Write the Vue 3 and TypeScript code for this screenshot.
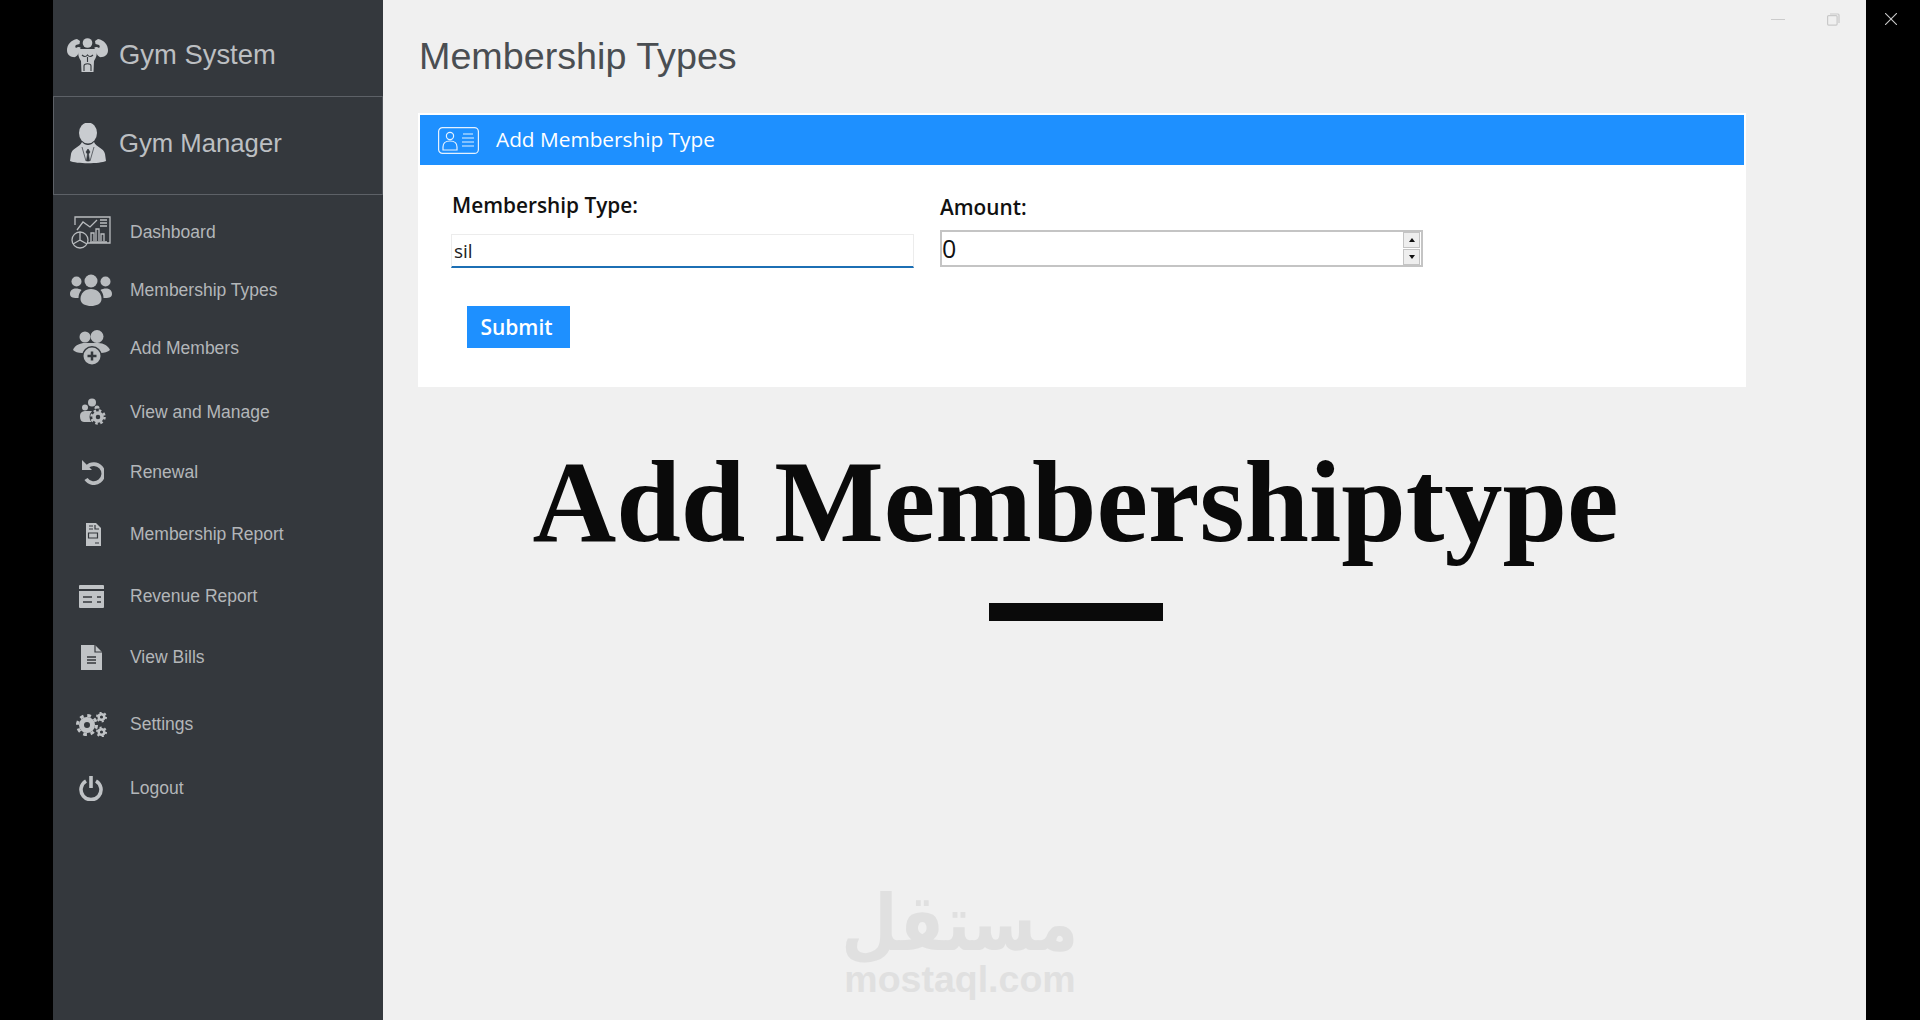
<template>
  <div class="page">
    <div class="edge edge-left"></div>

    <aside class="sidebar">
      <div class="brand">
        <svg class="brand-icon" width="41" height="34" viewBox="0 0 41 34">
          <circle cx="20.500" cy="5" r="4.800" fill="#c4c7ca" />
          <path d="M12 11 L29 11 C31 15 29 20 27 23 L26.500 34 L14.500 34 L14 23 C12 20 10 15 12 11 Z" fill="#c4c7ca" />
          <path d="M13.500 10 C12 15 10 20 6 19 C2 18.500 0 16 0 12 C0 7 4 2 10 1 L13 3 L12.500 6 L9 7 C8 8 8 9 9 10 C11 8.500 13 9 14 10 Z" fill="#c4c7ca" />
          <path d="M27.500 10 C29 15 31 20 35 19 C39 18.500 41 16 41 12 C41 7 37 2 31 1 L28 3 L28.500 6 L32 7 C33 8 33 9 32 10 C30 8.500 28 9 27 10 Z" fill="#c4c7ca" />
          <path d="M17 33 V28 C17 25 24 25 24 28 V33 M15 17 C17 19 19 19 20.500 17 C22 19 24 19 26 17 M20.500 19 V24" fill="none" stroke="#34383d" stroke-width="1.100" />
        </svg>
        <span>Gym System</span>
      </div>

      <div class="manager">
        <svg class="brand-icon" width="36" height="41" viewBox="0 0 36 41">
          <ellipse cx="18" cy="10" rx="9" ry="10.500" fill="#c9ccd0" />
          <path d="M12 19 C10 24 2 25 1 31 L0 38 C6 41 30 41 36 38 L35 31 C34 25 26 24 24 19 C21 23 15 23 12 19 Z" fill="#c9ccd0" />
          <path d="M18 26 L16 29 L17.500 31 L16.500 38 L19.500 38 L18.500 31 L20 29 Z M12 24 L16 38 M24 24 L20 38" fill="#34383d" stroke="#34383d" stroke-width="0.700" />
        </svg>
        <span>Gym Manager</span>
      </div>

      <nav class="nav">
        <a
          v-for="item in navItems"
          :key="item.label"
          class="nav-item"
          :style="{ marginTop: item.offset + 'px' }"
        >
          <span class="nav-icon">
            <svg v-if="item.icon === 'dashboard'" width="40" height="33" viewBox="0 0 40 33" fill="none" stroke="#b9bcbf" stroke-width="1.300">
              <path d="M4 9 V1 H39 V27 H15" />
              <path d="M6 14 L12 6 L19 11 L26 4" />
              <path d="M29 4 H36 M29 7 H36 M29 10 H36" />
              <circle cx="9" cy="24" r="8" fill="#34383d" />
              <path d="M9 16 V24 L16 28 M9 24 L2 28" />
              <path d="M20 25 V17 H23 V25 M25 25 V13 H28 V25 M30 25 V18 H33 V25 M19 26 H36" />
            </svg>
            <svg v-else-if="item.icon === 'users'" width="42" height="32" viewBox="0 0 42 32" fill="#b9bcbf">
              <circle cx="21" cy="7" r="6.500" />
              <circle cx="6.500" cy="7.500" r="5" />
              <circle cx="35.500" cy="7.500" r="5" />
              <path d="M10.500 25 C10.500 19 15 15 21 15 C27 15 31.500 19 31.500 25 C31.500 30 26 32 21 32 C16 32 10.500 30 10.500 25 Z" />
              <path d="M0 20 C0 16 3 14.500 6 14.500 C8 14.500 10 15 11.500 16 C9.500 18 8.500 21 8.500 24 C4 24 0 24 0 20 Z" />
              <path d="M42 20 C42 16 39 14.500 36 14.500 C34 14.500 32 15 30.500 16 C32.500 18 33.500 21 33.500 24 C38 24 42 24 42 20 Z" />
            </svg>
            <svg v-else-if="item.icon === 'add'" width="37" height="36" viewBox="0 0 37 36" fill="#b9bcbf">
              <circle cx="12" cy="7" r="5.500" />
              <circle cx="24" cy="6.500" r="6.500" />
              <path d="M0 20 C2 15 7 13 12 13 L25 13 C31 13 35 16 37 20 C35 22 31 23 28 23 L9 23 C5 23 2 22 0 20 Z" />
              <circle cx="19" cy="26" r="10" fill="#34383d" />
              <circle cx="19" cy="26" r="8.500" />
              <path d="M19 21.500 V30.500 M14.500 26 H23.500" stroke="#34383d" stroke-width="2.500" />
            </svg>
            <svg v-else-if="item.icon === 'manage'" class="shift-r" width="26" height="28" viewBox="0 0 26 28" fill="#b9bcbf">
              <circle cx="12" cy="4.500" r="4" />
              <circle cx="5" cy="9.500" r="3" />
              <circle cx="17" cy="10" r="2.500" />
              <path d="M0 18 C0 14 3 13 6 13 L14 13 L12 24 L4 24 C1 24 0 21 0 18 Z" />
              <circle cx="18" cy="19" r="8.500" fill="#34383d" />
              <circle cx="18" cy="19" r="4" fill="none" stroke="#b9bcbf" stroke-width="3.500" />
              <circle cx="18" cy="19" r="6.500" fill="none" stroke="#b9bcbf" stroke-width="2.500" stroke-dasharray="2.500 2.600" />
            </svg>
            <svg v-else-if="item.icon === 'renew'" class="shift-r" width="22" height="25" viewBox="0 0 22 25" fill="none">
              <path d="M5 7 A9.500 9.500 0 1 1 4 19" stroke="#b9bcbf" stroke-width="3.800" />
              <path d="M0 0 V10 H10 Z" fill="#b9bcbf" />
            </svg>
            <svg v-else-if="item.icon === 'report'" class="shift-r" width="16" height="23" viewBox="0 0 16 23">
              <path d="M1 0 H11 L16 5 V23 H1 Z" fill="#c0c3c6" />
              <path d="M4 3 H8 M4 6 H8 M10 2 L10 6 L14 6 M3.500 10 H12.500 V15 H3.500 Z M10 20 H14" fill="none" stroke="#34383d" stroke-width="1.200" />
            </svg>
            <svg v-else-if="item.icon === 'revenue'" width="25" height="23" viewBox="0 0 25 23">
              <rect width="25" height="23" rx="1" fill="#c0c3c6" />
              <path d="M0 5 H25" stroke="#34383d" stroke-width="2" />
              <path d="M4 12 H13 M4 17 H13 M18 12 H22 M18 17 H22" stroke="#34383d" stroke-width="1.500" />
            </svg>
            <svg v-else-if="item.icon === 'bills'" width="22" height="25" viewBox="0 0 22 25">
              <path d="M1 0 H15 L22 7 V25 H1 Z" fill="#c0c3c6" />
              <path d="M15 0 V7 H22" fill="none" stroke="#34383d" stroke-width="1.200" />
              <path d="M7 12 H16 M7 15 H16 M7 18 H16" stroke="#34383d" stroke-width="1.300" />
            </svg>
            <svg v-else-if="item.icon === 'settings'" width="31" height="25" viewBox="0 0 31 25" fill="none" stroke="#c0c3c6">
              <circle cx="11" cy="13" r="5.500" stroke-width="5" />
              <circle cx="11" cy="13" r="9.500" stroke-width="3" stroke-dasharray="3.700 3.760" />
              <circle cx="25.500" cy="5" r="2.800" stroke-width="2.500" />
              <circle cx="25.500" cy="5" r="4.500" stroke-width="2" stroke-dasharray="2 2.700" />
              <circle cx="25.500" cy="20" r="2.800" stroke-width="2.500" />
              <circle cx="25.500" cy="20" r="4.500" stroke-width="2" stroke-dasharray="2 2.700" />
            </svg>
            <svg v-else width="24" height="26" viewBox="0 0 24 26" fill="none" stroke="#c0c3c6" stroke-width="3.600">
              <path d="M7 6 A10 10 0 1 0 17 6" />
              <path d="M12 1 V13" />
            </svg>
          </span>
          <span>{{ item.label }}</span>
        </a>
      </nav>
    </aside>

    <main class="content">
      <h1 class="title">Membership Types</h1>

      <section class="card">
        <header class="card-header">
          <svg width="41" height="27" viewBox="0 0 41 27" fill="none" stroke="#e4f1ff" stroke-width="1.200">
            <rect x="0.600" y="0.600" width="39.800" height="25.800" rx="4" />
            <circle cx="12" cy="9" r="3.600" />
            <path d="M5 23 V20 C5 16 8 14 12 14 C16 14 19 16 19 20 V23 Z" />
            <path d="M25 7 H35 M24 11 H36 M24 15 H36 M24 19 H36" />
          </svg>
          <span>Add Membership Type</span>
        </header>

        <div class="card-body">
          <div class="fields">
            <div class="field field-type">
              <label for="type-input">Membership Type:</label>
              <input id="type-input" class="text-input" type="text" value="sil" />
            </div>
            <div class="field field-amount">
              <label for="amount-input">Amount:</label>
              <div class="number-box">
                <input id="amount-input" class="number-input" type="text" value="0" />
                <div class="spinner">
                  <span class="spin-btn"><i class="arrow-up"></i></span>
                  <span class="spin-btn"><i class="arrow-down"></i></span>
                </div>
              </div>
            </div>
          </div>
          <button class="submit" type="button">Submit</button>
        </div>
      </section>

      <div class="hero">
        <h2>Add Membershiptype</h2>
        <div class="hero-bar"></div>
      </div>
    </main>

    <div class="edge edge-right">
      <svg class="close" width="12" height="12" viewBox="0 0 12 12" stroke="#c8c8c8" stroke-width="1.100">
        <path d="M0 0 L12 12 M12 0 L0 12" />
      </svg>
    </div>

    <div class="window-controls">
      <span class="minimize"></span>
      <svg width="13" height="13" viewBox="0 0 13 13" fill="none" stroke="#c9c9c9" stroke-width="1.200">
        <rect x="0.600" y="2.600" width="9.500" height="9.500" rx="1" />
        <path d="M3 1 H11 A1 1 0 0 1 12 2 V10" />
      </svg>
    </div>

    <div class="watermark">
      <span class="watermark-ar" dir="rtl" lang="ar">مستقل</span>
      <span class="watermark-en">mostaql.com</span>
    </div>
  </div>
</template>

<script setup lang="ts">
interface NavItem {
  label: string
  icon: string
  offset: number
}

// the rows in the reference are not evenly spaced, offset is the extra gap above each one
const navItems: NavItem[] = [
  { label: 'Dashboard', icon: 'dashboard', offset: 0 },
  { label: 'Membership Types', icon: 'users', offset: 0 },
  { label: 'Add Members', icon: 'add', offset: 0 },
  { label: 'View and Manage', icon: 'manage', offset: 6 },
  { label: 'Renewal', icon: 'renew', offset: 2 },
  { label: 'Membership Report', icon: 'report', offset: 4 },
  { label: 'Revenue Report', icon: 'revenue', offset: 4 },
  { label: 'View Bills', icon: 'bills', offset: 3 },
  { label: 'Settings', icon: 'settings', offset: 9 },
  { label: 'Logout', icon: 'logout', offset: 6 },
]
</script>

<style>
html,
body {
  margin: 0;
  background: #f0f0f0;
}
</style>

<style scoped>
.page {
  position: relative;
  display: flex;
  width: 1920px;
  height: 1020px;
  overflow: hidden;
  background: #f0f0f0;
  font-family: "Liberation Sans", Arial, sans-serif;
}

.edge {
  flex: none;
  background: #000;
}

.edge-left {
  width: 53px;
}

.edge-right {
  width: 54px;
  display: flex;
  justify-content: center;
  padding-top: 13px;
  box-sizing: border-box;
}

.close {
  margin-left: -5px;
}

.sidebar {
  flex: none;
  width: 330px;
  background: #34383d;
  color: #b3b6b9;
}

.brand,
.manager {
  display: flex;
  align-items: center;
  box-sizing: border-box;
  color: #bcbfc2;
}

.brand {
  height: 96px;
  padding: 13px 0 0 14px;
  font-size: 27.4px;
}

.manager {
  height: 99px;
  padding: 0 0 4px 16px;
  border: 1px solid #5d6167;
  border-right-color: #50545a;
  font-size: 25.700px;
}

.brand-icon {
  flex: none;
}

.brand span {
  margin-left: 11px;
}

.manager span {
  margin-left: 13px;
}

.nav {
  display: flex;
  flex-direction: column;
  padding-top: 8px;
}

.nav-item {
  display: flex;
  align-items: center;
  height: 58px;
  padding-left: 16px;
  font-size: 17.500px;
}

.nav-icon {
  display: flex;
  flex: none;
  justify-content: center;
  align-items: center;
  width: 44px;
  margin-right: 17px;
}

.shift-r {
  margin-left: 3px;
}

.content {
  flex: 1;
  min-width: 0;
  padding-left: 35px;
}

.title {
  height: 113px;
  margin: 0;
  padding: 34px 0 0 1px;
  box-sizing: border-box;
  font-size: 37.700px;
  font-weight: 400;
  line-height: 44px;
  color: #4a4e52;
}

.card {
  box-sizing: border-box;
  width: 1328px;
  height: 274px;
  padding: 2px;
  background: #fff;
}

.card-header {
  display: flex;
  align-items: center;
  box-sizing: border-box;
  height: 50px;
  padding: 0 0 0 18px;
  background: #1e90ff;
  font-family: "Open Sans", sans-serif;
  font-size: 20.800px;
  color: #fff;
}

.card-header span {
  margin: 0 0 2px 17px;
}

.card-body {
  padding-left: 31px;
}

.fields {
  display: flex;
  gap: 26px;
}

.field label {
  display: block;
  font-family: "Open Sans", sans-serif;
  font-size: 20.800px;
  font-weight: 600;
  color: #111;
}

.field-type {
  width: 463px;
  padding-top: 25px;
}

.field-type label {
  height: 44px;
  padding-left: 1px;
  line-height: 30px;
}

.text-input {
  display: block;
  box-sizing: border-box;
  width: 100%;
  height: 34px;
  padding: 1px 2px 0;
  border: 1px solid #ececec;
  border-bottom: 2px solid #1c6fb4;
  outline: none;
  font-family: "Open Sans", sans-serif;
  font-size: 19px;
  color: #222;
}

.field-amount {
  width: 483px;
  padding-top: 27px;
}

.field-amount label {
  height: 38px;
  line-height: 30px;
}

.number-box {
  display: flex;
  align-items: center;
  box-sizing: border-box;
  height: 37px;
  padding-right: 1px;
  border: 2px solid #c4c4c4;
  background: #fff;
}

.number-input {
  flex: 1;
  box-sizing: border-box;
  min-width: 0;
  height: 33px;
  padding: 0 0 2px;
  border: none;
  outline: none;
  background: transparent;
  font-family: "Open Sans", sans-serif;
  font-size: 25px;
  line-height: 28px;
  color: #111;
}

.spinner {
  display: flex;
  flex-direction: column;
  gap: 1px;
  width: 17px;
}

.spin-btn {
  display: flex;
  justify-content: center;
  align-items: center;
  box-sizing: border-box;
  height: 16px;
  border: 1px solid #c4c4c4;
  background: #eeeeee;
}

.arrow-up,
.arrow-down {
  border-right: 3.500px solid transparent;
  border-left: 3.500px solid transparent;
}

.arrow-up {
  border-bottom: 4px solid #111;
}

.arrow-down {
  border-top: 4px solid #111;
}

.submit {
  display: block;
  box-sizing: border-box;
  width: 103px;
  height: 42px;
  margin: 38px 0 0 16px;
  padding: 0 4px 0 0;
  border: none;
  background: #1e90ff;
  font-family: "Open Sans", sans-serif;
  font-size: 21px;
  font-weight: 600;
  color: #fff;
}

.hero {
  display: flex;
  flex-direction: column;
  align-items: center;
  width: 1315px;
}

.hero h2 {
  margin: 50px 0 0;
  font-family: "Liberation Serif", serif;
  font-size: 116px;
  font-weight: 700;
  line-height: 130px;
  white-space: nowrap;
  color: #0a0a0a;
}

.hero-bar {
  width: 174px;
  height: 18px;
  margin-top: 36px;
  background: #0a0a0a;
}

.window-controls {
  position: absolute;
  top: 13px;
  left: 1771px;
  display: flex;
  gap: 42px;
}

.minimize {
  width: 14px;
  height: 1px;
  margin-top: 6px;
  background: #cbcbcb;
}

.watermark {
  position: absolute;
  top: 878px;
  left: 845px;
  display: flex;
  flex-direction: column;
  align-items: center;
  width: 230px;
  color: #e0e0e0;
  font-weight: 700;
}

.watermark-ar {
  display: block;
  height: 80px;
  font-family: "DejaVu Sans", sans-serif;
  font-size: 78px;
  line-height: 90px;
  transform: scaleX(0.83);
}

.watermark-en {
  font-family: "Liberation Sans", Arial, sans-serif;
  font-size: 37.500px;
  line-height: 43px;
}
</style>
